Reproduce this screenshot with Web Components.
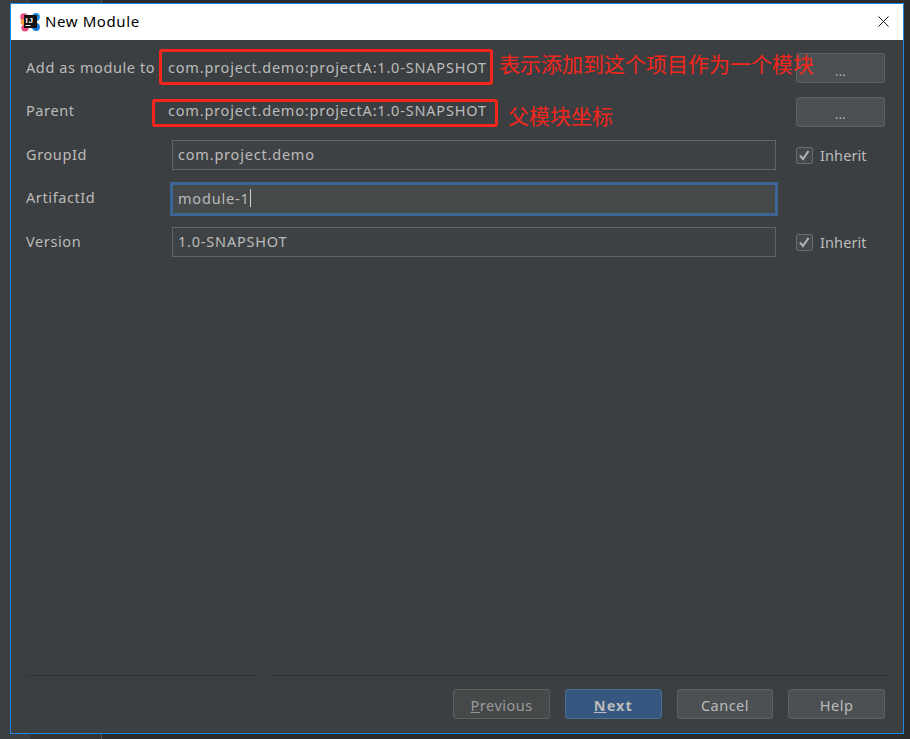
<!DOCTYPE html>
<html>
<head>
<meta charset="utf-8">
<title>New Module</title>
<style>
  html, body { margin: 0; height: 100%; }
  body {
    box-sizing: border-box;
    height: 739px;
    padding: 3px 6px 5px 10px;
    overflow: hidden;
    font: 14.5px "Noto Sans", "Open Sans", sans-serif;
    color: #bbbbbb;
    background: linear-gradient(90deg, #3c3f41 0 30px, #313335 30px 101px, #555 101px 102px, #2b2b2b 102px);
  }
</style>
</head>
<body>
<template id="dialog-window-tpl">
  <style>
    :host { display: flex; flex-direction: column; box-sizing: border-box; height: 731px; position: relative; border: 1px solid #1e88e5; background: #3c3f41; }
    .title { display: flex; align-items: center; height: 36px; flex: none; box-sizing: border-box; padding: 0 0 1px 9px; gap: 5px; background: #fff; color: #000; font: 15px "Noto Sans", sans-serif; letter-spacing: .6px; }
    .title span:first-of-type { margin-top: -2px; }
    .title svg { flex: none; }
    .close { margin-left: auto; margin-right: 14px; display: flex; }
    .main { flex: 1; display: flex; flex-direction: column; padding: 13px 18px 14px 15px; }
    .foot { margin-top: auto; }
  </style>
  <div class="title">
    <svg width="20" height="20" viewBox="0 0 20 20">
      <circle cx="4" cy="5" r="3.8" fill="#f0527c"/>
      <circle cx="5" cy="16" r="3.6" fill="#e8487a"/>
      <circle cx="3.6" cy="10" r="3" fill="#f79a3d"/>
      <circle cx="16" cy="5" r="3.9" fill="#1c8fe8"/>
      <circle cx="16" cy="15" r="3.9" fill="#1679d8"/>
      <rect x="4" y="3" width="13" height="13" fill="#111"/>
      <text x="5.6" y="11" font-family="Liberation Sans" font-weight="700" font-size="8" fill="#fff">IJ</text>
      <rect x="5.5" y="13" width="5" height="1" fill="#fff"/>
    </svg>
    <span><slot name="title"></slot></span>
    <span class="close">
      <svg width="11" height="11" viewBox="0 0 11 11"><path d="M.5.5l10 10M10.5.5l-10 10" stroke="#111" stroke-width="1" fill="none"/></svg>
    </span>
  </div>
  <div class="main">
    <slot></slot>
    <div class="foot"><slot name="footer"></slot></div>
  </div>
</template>

<template id="module-form-tpl">
  <style>
    :host { display: grid; grid-template-columns: 142px 607px 21px 89px; grid-auto-rows: 30px; row-gap: 13.5px; align-items: center; }
  </style>
  <slot></slot>
</template>

<template id="form-label-tpl">
  <style>
    :host { display: block; letter-spacing: .6px; white-space: nowrap; margin-top: -3px; }
    :host([value]) { letter-spacing: .8px; }
  </style>
  <slot></slot>
</template>

<template id="text-field-tpl">
  <style>
    :host { display: flex; align-items: center; box-sizing: border-box; height: 30px; margin: 0 0 0 4px; width: 604px; padding: 0 5px 3px; background: #3f4244; border: 1px solid #646464; letter-spacing: .8px; }
    :host([focused]) { background: #45494a; outline: 2px solid #3c6494; outline-offset: 0; border-color: #3c6494; padding-bottom: 1px; }
    .caret { display: none; width: 1px; height: 18px; background: #d0d0d0; }
    :host([focused]) .caret { display: block; }
  </style>
  <slot></slot><span class="caret"></span>
</template>

<template id="browse-button-tpl">
  <style>
    :host { display: flex; align-items: center; justify-content: center; box-sizing: border-box; height: 30px; background: #4c5052; border: 1px solid #5e6060; border-radius: 3px; padding-top: 6px; font-size: 12px; letter-spacing: .5px; }
  </style>
  <slot>...</slot>
</template>

<template id="check-box-tpl">
  <style>
    :host { display: flex; align-items: center; gap: 7px; letter-spacing: .1px; white-space: nowrap; }
    .box { box-sizing: border-box; width: 17px; height: 17px; background: #43494a; border: 1px solid #6b6b6b; border-radius: 2px; display: flex; }
  </style>
  <span class="box"><svg width="15" height="15" viewBox="0 0 15 15"><path d="M3 7.5l3 3.5 5.5-8" stroke="#b0b0b0" stroke-width="2.2" fill="none"/></svg></span>
  <slot></slot>
</template>

<template id="button-bar-tpl">
  <style>
    :host { display: block; }
    .rule { display: flex; gap: 13px; height: 1px; margin-bottom: 13px; margin-right: -3px; }
    .rule i { display: block; background: #323232; }
    .rule i:first-child { width: 230px; }
    .rule i:last-child { flex: 1; }
    .row { display: flex; justify-content: flex-end; gap: 15px; }
  </style>
  <div class="rule"><i></i><i></i></div>
  <div class="row"><slot></slot></div>
</template>

<template id="dialog-button-tpl">
  <style>
    :host { display: flex; align-items: center; justify-content: center; box-sizing: border-box; width: 96.7px; height: 30px; padding-top: 1px; background: #4c5052; border: 1px solid #5e6060; border-radius: 3px; letter-spacing: .5px; }
    :host([disabled]) { background: #45494a; color: #999; }
    :host([primary]) { background: #365880; border-color: #4c708c; font-weight: 700; letter-spacing: 1px; }
  </style>
  <slot></slot>
</template>

<template id="note-box-tpl">
  <style>
    :host { position: absolute; box-sizing: border-box; display: block; border: 3px solid #f5261b; border-radius: 3px; }
  </style>
</template>

<template id="note-text-tpl">
  <style>
    :host { position: absolute; display: block; color: #f5261b; font: 21px "Noto Sans CJK SC", sans-serif; line-height: 28px; white-space: nowrap; }
  </style>
  <slot></slot>
</template>

<dialog-window>
  <span slot="title">New Module</span>
  <module-form>
    <form-label>Add as module to</form-label>
    <form-label value>com.project.demo:projectA:1.0-SNAPSHOT</form-label>
    <span></span>
    <browse-button></browse-button>

    <form-label>Parent</form-label>
    <form-label value>com.project.demo:projectA:1.0-SNAPSHOT</form-label>
    <span></span>
    <browse-button></browse-button>

    <form-label>GroupId</form-label>
    <text-field>com.project.demo</text-field>
    <span></span>
    <check-box>Inherit</check-box>

    <form-label>ArtifactId</form-label>
    <text-field focused>module-1</text-field>
    <span></span>
    <span></span>

    <form-label>Version</form-label>
    <text-field>1.0-SNAPSHOT</text-field>
    <span></span>
    <check-box>Inherit</check-box>
  </module-form>
  <button-bar slot="footer">
    <dialog-button disabled><span><u>P</u>revious</span></dialog-button>
    <dialog-button primary><span><u>N</u>ext</span></dialog-button>
    <dialog-button>Cancel</dialog-button>
    <dialog-button>Help</dialog-button>
  </button-bar>
  <note-box style="left:148px;top:45px;width:334px;height:36px"></note-box>
  <note-box style="left:141px;top:95px;width:346px;height:28px"></note-box>
  <note-text style="left:488px;top:45px">表示添加到这个项目作为一个模块</note-text>
  <note-text style="left:497px;top:97px">父模块坐标</note-text>
</dialog-window>

<script>
  // every element just clones its template into an open shadow root
  const names = ['dialog-window', 'module-form', 'form-label', 'text-field', 'browse-button',
    'check-box', 'button-bar', 'dialog-button', 'note-box', 'note-text'];
  names.forEach((name) => {
    customElements.define(name, class extends HTMLElement {
      constructor() {
        super();
        const tpl = document.getElementById(name + '-tpl');
        this.attachShadow({ mode: 'open' }).appendChild(tpl.content.cloneNode(true));
      }
    });
  });
</script>
</body>
</html>
